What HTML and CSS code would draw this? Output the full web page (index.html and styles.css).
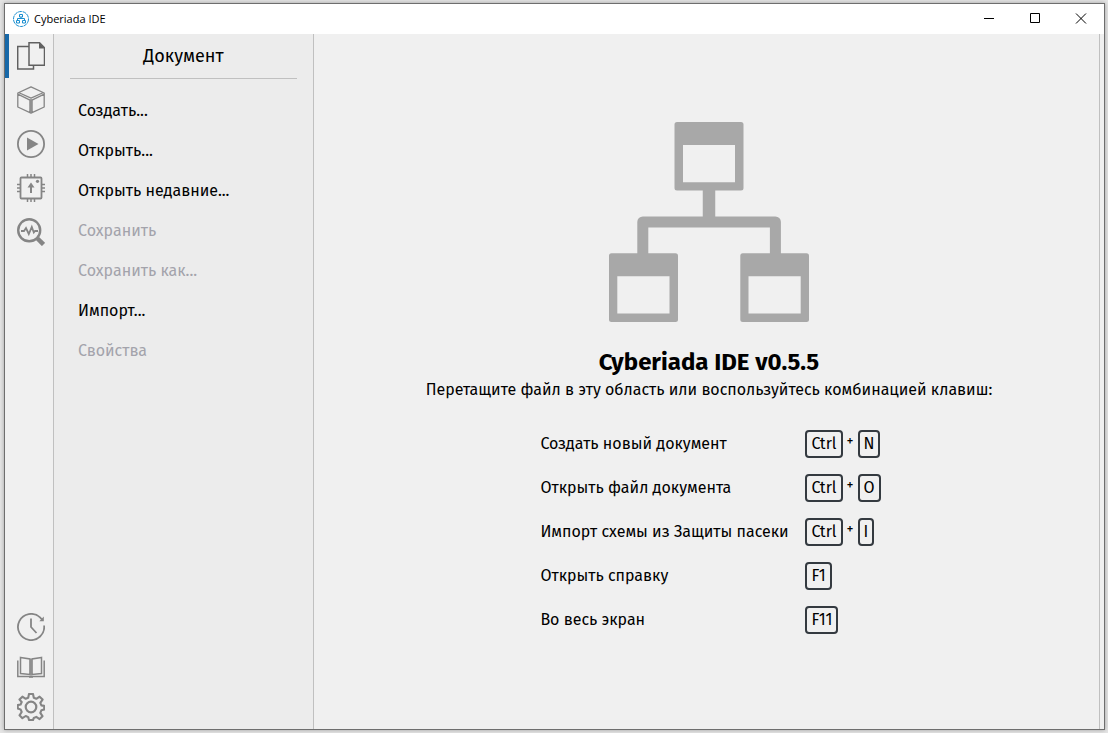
FILE: index.html
```html
<!DOCTYPE html>
<html lang="ru">
<head>
<meta charset="utf-8">
<title>Cyberiada IDE</title>
<link rel="stylesheet" href="styles.css">
</head>
<body>
<div class="window">
  <header class="titlebar">
    <svg class="app-icon" viewBox="0 0 16 16" fill="none" stroke="#1b8fd0"><circle cx="8" cy="8" r="7.5" stroke-dasharray="4 .6"/><path d="M6.500 3.500h3v2.500h-3zM3.500 9.500h3v2.500h-3zM9.500 9.500h3v2.500h-3zM8 6v1.500M4.500 9.500v-2h7v2"/></svg>
    <span class="app-name">Cyberiada IDE</span>
    <div class="window-buttons">
      <button type="button" aria-label="Свернуть"><svg viewBox="0 0 11 11"><path d="M0 4.500h10"/></svg></button>
      <button type="button" aria-label="Развернуть"><svg viewBox="0 0 11 11"><path d="M.5 -.5h9v9h-9z"/></svg></button>
      <button type="button" aria-label="Закрыть"><svg viewBox="0 0 11 11"><path d="M0 -.5l10 10M10 -.5l-10 10"/></svg></button>
    </div>
  </header>
  <div class="workspace">
    <nav class="rail">
      <button type="button" class="rail-button active" aria-label="Документ"><svg viewBox="0 0 28 28"><path d="M11.500 4.500H.700V27h15.800v-3.500M12 .700h10.500l5 5v17.600H12z"/><path class="solid" d="M22 .5v6h6z"/></svg></button>
      <button type="button" class="rail-button" aria-label="Компоненты"><svg viewBox="0 0 28 28" stroke-linejoin="round"><path stroke-width="1.300" d="M14 .8L27.200 7v14L14 27.200.8 21V7zM.8 8.200L13 14.200v12.600M27.200 8.200L15 14.200v12.600M1.500 6.500L14 12.200l12.500-5.700"/><path d="M14 13v14" stroke-width="2.500" opacity=".7"/></svg></button>
      <button type="button" class="rail-button" aria-label="Запуск"><svg viewBox="0 0 28 28"><circle cx="14" cy="14" r="13.100" stroke-width="1.800"/><path class="solid" d="M10 7.500v13L21.500 14z"/></svg></button>
      <button type="button" class="rail-button" aria-label="Загрузчик"><svg viewBox="0 0 28 28"><rect x="3.500" y="3.500" width="21" height="21" rx="1" stroke-width="1.800"/><path d="M10.500 0v3.500M14 0v3.500M17.500 0v3.500M10.500 24.500V28M14 24.500V28M17.500 24.500V28M0 10.500h3.500M0 14h3.500M0 17.500h3.500M24.500 10.500H28M24.500 14H28M24.500 17.500H28"/><path d="M14 19v-8" stroke-width="2"/><path class="solid" d="M14 8.500l3.500 5h-7z"/><circle class="solid" cx="20.500" cy="7.300" r="1.600"/></svg></button>
      <button type="button" class="rail-button" aria-label="Монитор порта"><svg viewBox="0 0 28 28"><circle cx="12.200" cy="12.300" r="11" stroke-width="2.400"/><path d="M4 13h3l2-3 2.800 6 3-7 2 5.500 1.200-1.500H21" stroke-width="1.800"/><path d="M20.500 20.500L26.500 26.500" stroke-width="4.500"/></svg></button>
      <div class="rail-bottom">
        <button type="button" class="rail-button" aria-label="История"><svg viewBox="0 0 28 28"><path stroke-width="1.800" d="M27.100 12.500A13.100 13.100 0 1 1 23 4.400L25.500 7M14 5.500V14l5.500 6"/><path class="solid" d="M26.800 3.500v4.700h-4.500z"/></svg></button>
        <button type="button" class="rail-button" aria-label="Документация"><svg viewBox="0 0 28 28"><path d="M.8 7.500v15.900h26.400V7.500M3.500 4.500L13 6v15.500l-9.500-1zM24.500 4.500L15 6v15.500l9.500-1z"/><path d="M14 6v16.500" stroke-width="2.500" opacity=".65"/><path d="M12 24h4"/></svg></button>
        <button type="button" class="rail-button" aria-label="Настройки"><svg viewBox="0 0 28 28" stroke-linejoin="round"><circle cx="14" cy="14" r="5.300" stroke-width="2.200"/><path stroke-width="2.100" d="M12 1h4l.8 3.800 2.500 1L22.600 3.700l3 2.900-2.300 3.300 1.100 2.500 2.800.5v3.600l-2.800.8-1.100 2.600 2.200 3.300-2.900 2.900-3.300-2.200-2.500 1.100L16 27h-4l-.8-2.900-2.500-1.100-3.300 2.200-2.900-2.900 2.200-3.300-1.100-2.600-2.800-.8v-3.500l2.800-.6 1.100-2.500L2.500 6.600l2.900-2.900 3.300 2.100 2.500-1z"/></svg></button>
      </div>
    </nav>
    <aside class="panel">
      <h1 class="panel-title">Документ</h1>
      <div class="menu">
        <button type="button">Создать...</button>
        <button type="button">Открыть...</button>
        <button type="button">Открыть недавние...</button>
        <button type="button" disabled>Сохранить</button>
        <button type="button" disabled>Сохранить как...</button>
        <button type="button">Импорт...</button>
        <button type="button" disabled>Свойства</button>
      </div>
    </aside>
    <main class="welcome">
      <svg class="logo" viewBox="0 0 200 200"><path fill="#a8a8a8" fill-rule="evenodd" d="M68 0h64a2.500 2.500 0 0 1 2.500 2.500v63.500a2.500 2.500 0 0 1-2.500 2.500H68a2.500 2.500 0 0 1-2.500-2.500V2.500A2.500 2.500 0 0 1 68 0zM74 23v37.300h52V23zM2.500 131.300h64a2.500 2.500 0 0 1 2.500 2.500v63.700a2.500 2.500 0 0 1-2.500 2.500h-64a2.500 2.500 0 0 1-2.500-2.500v-63.700a2.500 2.500 0 0 1 2.500-2.500zM8.300 154.300v37.200h52.200v-37.200zM133.800 131.300h63.700a2.500 2.500 0 0 1 2.500 2.500v63.700a2.500 2.500 0 0 1-2.500 2.500h-63.700a2.500 2.500 0 0 1-2.500-2.500v-63.700a2.500 2.500 0 0 1 2.500-2.500zM139.500 154.300v37.200h52.200v-37.200z"/><path fill="none" stroke="#a8a8a8" stroke-width="12.500" d="M100 68v33"/><path fill="none" stroke="#a8a8a8" stroke-width="11" stroke-linejoin="round" d="M33.800 132v-32h132.600v32"/></svg>
      <h2 class="product">Cyberiada IDE v0.5.5</h2>
      <p class="hint">Перетащите файл в эту область или воспользуйтесь комбинацией клавиш:</p>
      <table class="shortcuts">
        <tr><th scope="row">Создать новый документ</th><td><kbd>Ctrl</kbd><sup>+</sup><kbd>N</kbd></td></tr>
        <tr><th scope="row">Открыть файл документа</th><td><kbd>Ctrl</kbd><sup>+</sup><kbd>O</kbd></td></tr>
        <tr><th scope="row">Импорт схемы из Защиты пасеки</th><td><kbd>Ctrl</kbd><sup>+</sup><kbd>I</kbd></td></tr>
        <tr><th scope="row">Открыть справку</th><td><kbd>F1</kbd></td></tr>
        <tr><th scope="row">Во весь экран</th><td><kbd>F11</kbd></td></tr>
      </table>
    </main>
  </div>
</div>
</body>
</html>
```
FILE: styles.css
```css
* { box-sizing: border-box; }
body {
  margin: 0;
  min-height: 100vh;
  display: flex;
  padding: 3px 3px 3px 4px;
  background: #e4e4e4;
  color: #000;
  font: 16px/24px "Fira Sans", Roboto, sans-serif;
}
button {
  border: 0;
  padding: 0;
  background: none;
  color: inherit;
  font: inherit;
}
.window {
  flex: 1;
  display: flex;
  flex-direction: column;
  border: 1px solid #6e6e6e;
  background: #f0f0f0;
  box-shadow: 0 0 4px rgba(0, 0, 0, .3);
}
.titlebar {
  display: flex;
  align-items: center;
  height: 30px;
  padding-left: 8px;
  background: #fff;
}
.app-icon { width: 16px; height: 16px; }
.app-name {
  margin-left: 5px;
  font: 11px/16px "Open Sans", sans-serif;
}
.window-buttons { display: flex; margin-left: auto; }
.window-buttons button {
  display: grid;
  place-items: center;
  width: 46px;
  height: 30px;
}
.window-buttons svg {
  width: 11px;
  height: 11px;
  overflow: visible;
  fill: none;
  stroke: #000;
}
.workspace { flex: 1; display: flex; }
.rail {
  flex: none;
  display: flex;
  flex-direction: column;
  width: 49px;
  border-right: 1px solid #c0c0c0;
}
.rail-button {
  display: grid;
  place-items: center;
  width: 100%;
  height: 44px;
  border-left: 4px solid transparent;
}
.rail-button.active { border-color: #1768a8; }
.rail-button svg {
  width: 28px;
  height: 28px;
  fill: none;
  stroke: #858585;
  stroke-width: 1.5;
}
.rail-button .solid { fill: #858585; stroke: none; }
.rail-button.active svg { stroke: #606060; }
.rail-button.active .solid { fill: #606060; }
.rail-bottom { margin-top: auto; padding-bottom: 2px; }
.rail-bottom .rail-button { height: 40px; }
.panel {
  flex: none;
  width: 260px;
  padding: 0 16px;
  border-right: 1px solid #c0c0c0;
  background: #ececec;
}
.panel-title {
  margin: 0;
  padding: 10px 0;
  border-bottom: 1px solid #c0c0c0;
  font-size: 18px;
  font-weight: 400;
  text-align: center;
}
.menu { padding-top: 12px; }
.menu button {
  display: block;
  width: 100%;
  height: 40px;
  padding: 0 8px;
  text-align: left;
}
.menu button:disabled { color: #a3a3ab; }
.welcome {
  position: relative;
  flex: 1;
  display: flex;
  flex-direction: column;
  align-items: center;
  justify-content: center;
}
.welcome::after {
  content: "";
  position: absolute;
  top: 0;
  right: 4px;
  bottom: 0;
  border-right: 1px solid #c0c0c0;
}
.logo { width: 200px; height: 200px; }
.product {
  margin: 24px 0 0;
  font-size: 24px;
  line-height: 32px;
  font-weight: 700;
}
.hint { margin: 0; }
.shortcuts {
  margin: 20px 0 0 3px;
  border-collapse: collapse;
}
.shortcuts th {
  width: 265px;
  padding: 0;
  font-weight: 400;
  text-align: left;
}
.shortcuts td { height: 44px; padding: 0; }
kbd {
  display: inline-block;
  padding: 0 4px;
  border: 2px solid #343a40;
  border-radius: 4px;
  font: inherit;
}
sup {
  padding: 0 4px;
  font-size: 14px;
  line-height: 0;
  vertical-align: 3px;
}
```
